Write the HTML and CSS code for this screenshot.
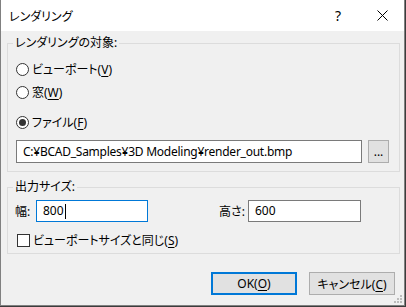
FILE: index.html
```html
<!DOCTYPE html>
<html lang="ja">
<head>
    <meta charset="UTF-8">
    <meta name="viewport" content="width=device-width, initial-scale=1.0">
    <title>レンダリング</title>
    <link rel="stylesheet" href="styles.css">
</head>
<body>
    <div class="window">
        <div class="titlebar">
            <span class="title">レンダリング</span>
            <span class="tb-help">?</span>
            <span class="tb-close">
                <svg width="11" height="11" viewBox="0 0 11 11">
                    <path d="M0.5 0.5 L10.5 10.5 M10.5 0.5 L0.5 10.5" stroke="#000" stroke-width="1" fill="none"/>
                </svg>
            </span>
        </div>

        <div class="content">
            <fieldset class="group group-target">
                <legend>レンダリングの対象:</legend>
                <div class="opt opt-1"><span class="radio"></span><span>ビューポート(<u>V</u>)</span></div>
                <div class="opt opt-2"><span class="radio"></span><span>窓(<u>W</u>)</span></div>
                <div class="opt opt-3"><span class="radio checked"></span><span>ファイル(<u>F</u>)</span></div>
                <div class="file-row">
                    <div class="textbox file-box">C:¥BCAD_Samples¥3D Modeling¥render_out.bmp</div>
                    <div class="browse">...</div>
                </div>
            </fieldset>

            <fieldset class="group group-size">
                <legend>出力サイズ:</legend>
                <div class="size-row">
                    <span class="lbl lbl-w">幅:</span>
                    <div class="textbox size-box focus"><span>800</span><span class="caret"></span></div>
                    <span class="lbl lbl-h">高さ:</span>
                    <div class="textbox size-box"><span>600</span></div>
                </div>
                <div class="check-row"><span class="checkbox"></span><span>ビューポートサイズと同じ(<u>S</u>)</span></div>
            </fieldset>

            <div class="buttons">
                <div class="btn default"><span>OK(<u>O</u>)</span></div>
                <div class="btn"><span>キャンセル(<u>C</u>)</span></div>
            </div>

            <svg class="grip" width="9" height="9" viewBox="0 0 9 9">
                <rect x="6" y="0" width="2" height="2" fill="#bcbcbc"/>
                <rect x="3" y="3" width="2" height="2" fill="#bcbcbc"/>
                <rect x="6" y="3" width="2" height="2" fill="#bcbcbc"/>
                <rect x="0" y="6" width="2" height="2" fill="#bcbcbc"/>
                <rect x="3" y="6" width="2" height="2" fill="#bcbcbc"/>
                <rect x="6" y="6" width="2" height="2" fill="#bcbcbc"/>
            </svg>
        </div>
    </div>
</body>
</html>
```

FILE: styles.css
```css
body {
    margin: 0;
    background-color: #3c3c3c;
    font-family: "Noto Sans", "Noto Sans CJK JP", sans-serif;
    font-size: 12px;
    font-feature-settings: "palt";
    color: #000;
    overflow: hidden;
}

u {
    text-underline-offset: 2px;
}

.window {
    width: 405px;
    height: 306px;
    box-sizing: border-box;
    border-left: 1px solid #808080;
    border-right: 1px solid #808080;
    border-bottom: 1px solid #808080;
    background-color: #f0f0f0;
    display: flex;
    flex-direction: column;
}

.titlebar {
    height: 31px;
    flex: none;
    background-color: #fff;
    display: flex;
    align-items: center;
}

.title {
    flex: 1;
    margin-left: 8px;
}

.tb-help {
    width: 30px;
    text-align: center;
    font-family: "Noto Sans", sans-serif;
    font-size: 14px;
    margin-right: 7px;
}

.tb-close {
    width: 44px;
    display: flex;
    justify-content: center;
}

.content {
    flex: 1;
    padding: 0 4px 0 6px;
    position: relative;
}

.group {
    margin: 0;
    border: 1px solid #dcdcdc;
    min-width: 0;
    padding: 0 0 0 8px;
}

.group legend {
    margin-left: -3px;
    padding: 0 2px;
    line-height: 16px;
}

.group-target {
    margin-top: 4px;
    padding-bottom: 8px;
}

.group-size {
    margin-top: 7px;
    padding-bottom: 5px;
}

.opt {
    display: flex;
    align-items: center;
    gap: 3px;
    height: 18px;
}

.opt-1 { margin-top: 9px; }
.opt-2 { margin-top: 5px; }
.opt-3 { margin-top: 12px; }

.radio {
    width: 13px;
    height: 13px;
    box-sizing: border-box;
    border: 1px solid #333;
    border-radius: 50%;
    background-color: #fff;
    display: flex;
    align-items: center;
    justify-content: center;
}

.radio.checked::after {
    content: "";
    width: 7px;
    height: 7px;
    border-radius: 50%;
    background-color: #333;
}

.textbox {
    height: 23px;
    box-sizing: border-box;
    border: 1px solid #7a7a7a;
    background-color: #fff;
    padding-left: 6px;
    line-height: 21px;
    display: flex;
    align-items: center;
}

.textbox.focus {
    border-color: #0078d7;
}

.caret {
    width: 1px;
    height: 15px;
    background-color: #000;
    margin-left: 1px;
}

.file-row {
    margin-top: 9px;
    display: flex;
    gap: 6px;
}

.file-box {
    width: 346px;
    letter-spacing: -0.25px;
}

.browse {
    width: 21px;
    height: 23px;
    box-sizing: border-box;
    border: 1px solid #adadad;
    background-color: #e1e1e1;
    text-align: center;
    line-height: 21px;
}

.size-row {
    margin-top: 5px;
    display: flex;
    align-items: center;
}

.size-box {
    height: 22px;
    line-height: 20px;
}

.lbl-w {
    width: 21px;
    margin-left: -1px;
}

.size-row .size-box:nth-of-type(1) {
    width: 112px;
}

.lbl-h {
    width: 29px;
    margin-left: 71px;
}

.size-row .size-box:last-child {
    width: 113px;
}

.check-row {
    margin-top: 10px;
    height: 16px;
    display: flex;
    align-items: center;
    gap: 3px;
}

.checkbox {
    width: 13px;
    height: 13px;
    box-sizing: border-box;
    border: 1px solid #333;
    background-color: #fff;
    margin-left: 1px;
}

.buttons {
    margin-top: 18px;
    margin-right: 5px;
    display: flex;
    justify-content: flex-end;
    gap: 12px;
}

.btn {
    width: 86px;
    height: 23px;
    box-sizing: border-box;
    border: 1px solid #adadad;
    background-color: #e1e1e1;
    display: flex;
    align-items: center;
    justify-content: center;
}

.btn.default {
    border: 2px solid #0078d7;
}

.grip {
    position: absolute;
    right: 1px;
    bottom: 1px;
}
```
